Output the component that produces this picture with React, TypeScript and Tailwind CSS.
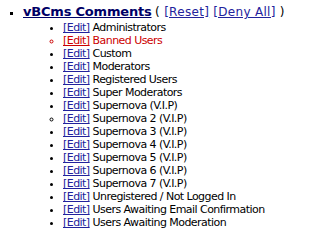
import React from "react";

const groups: { name: string; circle?: boolean; red?: boolean }[] = [
  { name: "Administrators" },
  { name: "Banned Users", circle: true, red: true },
  { name: "Custom" },
  { name: "Moderators" },
  { name: "Registered Users" },
  { name: "Super Moderators" },
  { name: "Supernova (V.I.P)" },
  { name: "Supernova 2 (V.I.P)", circle: true },
  { name: "Supernova 3 (V.I.P)" },
  { name: "Supernova 4 (V.I.P)" },
  { name: "Supernova 5 (V.I.P)" },
  { name: "Supernova 6 (V.I.P)" },
  { name: "Supernova 7 (V.I.P)" },
  { name: "Unregistered / Not Logged In" },
  { name: "Users Awaiting Email Confirmation" },
  { name: "Users Awaiting Moderation" },
];

export default function App() {
  return (
    <div className="bg-white w-[289px] h-[239px] overflow-hidden font-['DejaVu_Sans',sans-serif] text-[11px] text-black">
      <ul className="list-[square] pl-[23px] pt-[4px] m-0">
        <li className="leading-[16px]">
          <a href="#" className="font-bold text-[13px] text-[#000066] underline tracking-[-0.2px]">
            vBCms Comments
          </a>{" "}
          <span className="text-[12px] tracking-[0.3px]">
            ({" "}
            <a href="#" className="text-[#22229c] underline">[Reset]</a>{" "}
            <a href="#" className="text-[#22229c] underline">[Deny All]</a> )
          </span>
          <ul className="list-disc pl-[40px] m-0 tracking-[-0.55px]">
            {groups.map((g) => (
              <li
                key={g.name}
                className={`leading-[13px] ${g.circle ? "list-[circle]" : ""} ${g.red ? "text-[#cc0000] marker:text-[#cc0000]" : ""}`}
              >
                <a href="#" className={`underline ${g.red ? "text-[#cc0000]" : "text-[#22229c]"}`}>
                  [Edit]
                </a>{" "}
                {g.name}
              </li>
            ))}
          </ul>
        </li>
      </ul>
    </div>
  );
}
